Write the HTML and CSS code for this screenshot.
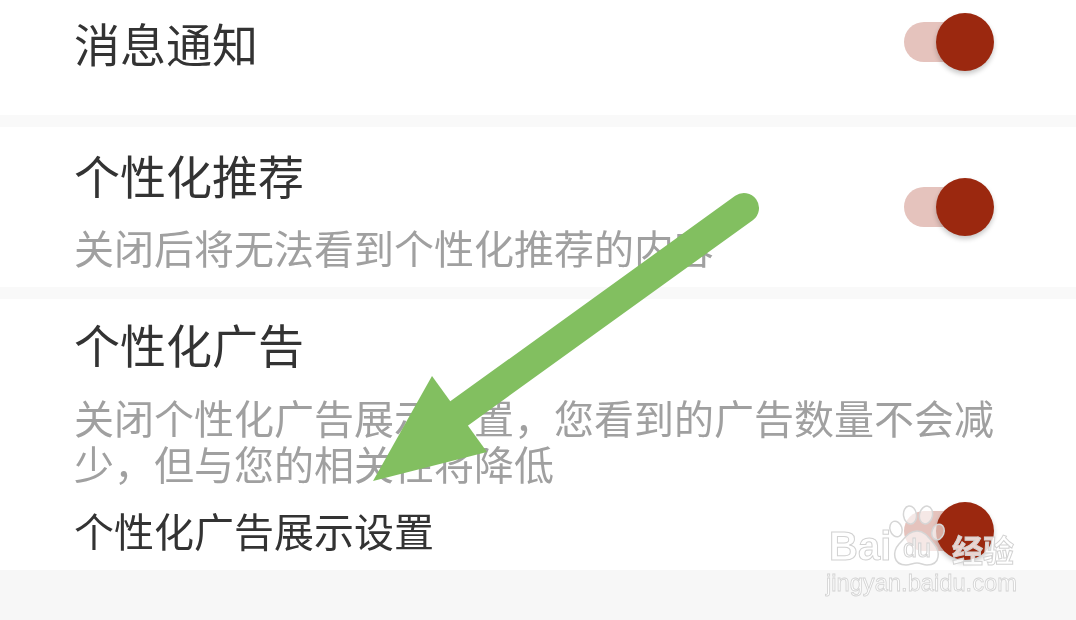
FILE: index.html
```html
<!DOCTYPE html>
<html lang="zh-CN">
<head>
<meta charset="utf-8">
<title>设置</title>
<link rel="stylesheet" href="styles.css">
</head>
<body>
<main class="page">
  <section class="row row-first">
    <h2 class="title">消息通知</h2>
    <div class="toggle"><span class="track"></span><span class="knob"></span></div>
  </section>
  <section class="row row-second">
    <div class="copy">
      <h2 class="title">个性化推荐</h2>
      <p class="desc">关闭后将无法看到个性化推荐的内容</p>
    </div>
    <div class="toggle"><span class="track"></span><span class="knob"></span></div>
  </section>
  <section class="row-third">
    <h2 class="title">个性化广告</h2>
    <p class="desc">关闭个性化广告展示设置，您看到的广告数量不会减少，但与您的相关性将降低</p>
    <div class="subrow">
      <span class="subtitle">个性化广告展示设置</span>
      <div class="toggle"><span class="track"></span><span class="knob"></span></div>
    </div>
  </section>
  <div class="foot"></div>

  <svg class="arrow" viewBox="0 0 1076 620" width="1076" height="620" aria-hidden="true">
    <line x1="744" y1="208" x2="450" y2="420" stroke="#82bf60" stroke-width="30" stroke-linecap="round"/>
    <polygon points="373,481 432,376 487,452" fill="#82bf60"/>
  </svg>

  <div class="mark">
    <div class="mark-top">
      <span class="mark-word">Bai</span>
      <svg class="paw" viewBox="0 0 60 66" width="60" height="66" aria-hidden="true">
        <g fill="rgba(255,255,255,.62)" stroke="#d6d6d6" stroke-width="1.5">
          <ellipse cx="8" cy="25" rx="6" ry="8" transform="rotate(-18 8 25)"/>
          <ellipse cx="22" cy="11" rx="6.5" ry="9" transform="rotate(-8 22 11)"/>
          <ellipse cx="38" cy="11" rx="6.5" ry="9" transform="rotate(12 38 11)"/>
          <ellipse cx="50" cy="28" rx="6" ry="8" transform="rotate(20 50 28)"/>
          <path d="M29 27c8 0 12 7 17 13 6 7 7 21-7 21-4 0-6-2-10-2s-7 2-11 2C5 61 4 48 11 40c6-6 10-13 18-13z"/>
        </g>
      </svg>
      <span class="mark-du">du</span>
      <span class="mark-cn">经验</span>
    </div>
    <div class="mark-url">jingyan.baidu.com</div>
  </div>
</main>
</body>
</html>
```
FILE: styles.css
```css
* { box-sizing: border-box; margin: 0; padding: 0; }
html, body { width: 1076px; height: 620px; overflow: hidden; background: #fff; }
body { font-family: "Noto Sans CJK SC", "Liberation Sans", sans-serif; }

.page { position: relative; width: 1076px; height: 620px; display: flex; flex-direction: column; background: #fff; filter: blur(.35px); }

.row { display: flex; justify-content: space-between; align-items: center; padding: 0 82px 0 74px; }
.row-first { height: 127px; padding-bottom: 31px; border-bottom: 12px solid #f9f9f9; }
.row-second { height: 172px; border-bottom: 12px solid #f9f9f9; }
.copy { flex: 1; min-width: 0; }
.row-third { height: 271px; padding: 14px 82px 0 74px; }
.foot { flex: 1; background: #f7f7f7; }

.title { font-size: 46px; line-height: 60px; font-weight: 400; color: #333; }
.desc { font-size: 40px; line-height: 46px; color: #a0a0a0; margin-top: 21px; }
.row-second .title { margin-top: -1px; }
.row-second .desc { margin-top: 20px; }
.row-third .desc { width: 920px; }
.subrow { display: flex; justify-content: space-between; align-items: center; margin-top: 14px; }
.subtitle { font-size: 40px; line-height: 60px; color: #333; }

.toggle { position: relative; width: 90px; height: 40px; flex: none; }
.subrow .toggle { margin-top: 2px; }
.track { display: block; width: 60px; height: 40px; border-radius: 20px; background: #e5c3bd; }
.knob { position: absolute; left: 32px; top: -9px; width: 58px; height: 58px; border-radius: 50%; background: #9b280f; box-shadow: 0 3px 5px rgba(0,0,0,.22); }

.arrow { position: absolute; left: 0; top: 0; }

.mark { position: absolute; left: 826px; top: 504px; width: 200px; }
.mark-top { display: flex; align-items: flex-end; height: 66px; }
.mark-word, .mark-du, .mark-cn { color: rgba(255,255,255,.8); -webkit-text-stroke: 1px #d2d2d2; font-family: "Liberation Sans", sans-serif; font-size: 40px; line-height: 44px; }
.mark-word { width: 64px; padding-left: 3px; font-weight: 700; margin-bottom: 2px; }
.paw { flex: none; margin-left: -2px; }
.mark-du { position: absolute; left: 77px; top: 22px; font-size: 25px; }
.mark-cn { font-family: "Noto Sans CJK SC", sans-serif; font-size: 31px; font-weight: 700; margin-left: 4px; margin-bottom: 1px; line-height: 40px; white-space: nowrap; }
.mark-url { font-family: "Liberation Sans", sans-serif; font-size: 23.7px; line-height: 26px; color: rgba(255,255,255,.75); -webkit-text-stroke: 0.8px #d2d2d2; white-space: nowrap; }
```
